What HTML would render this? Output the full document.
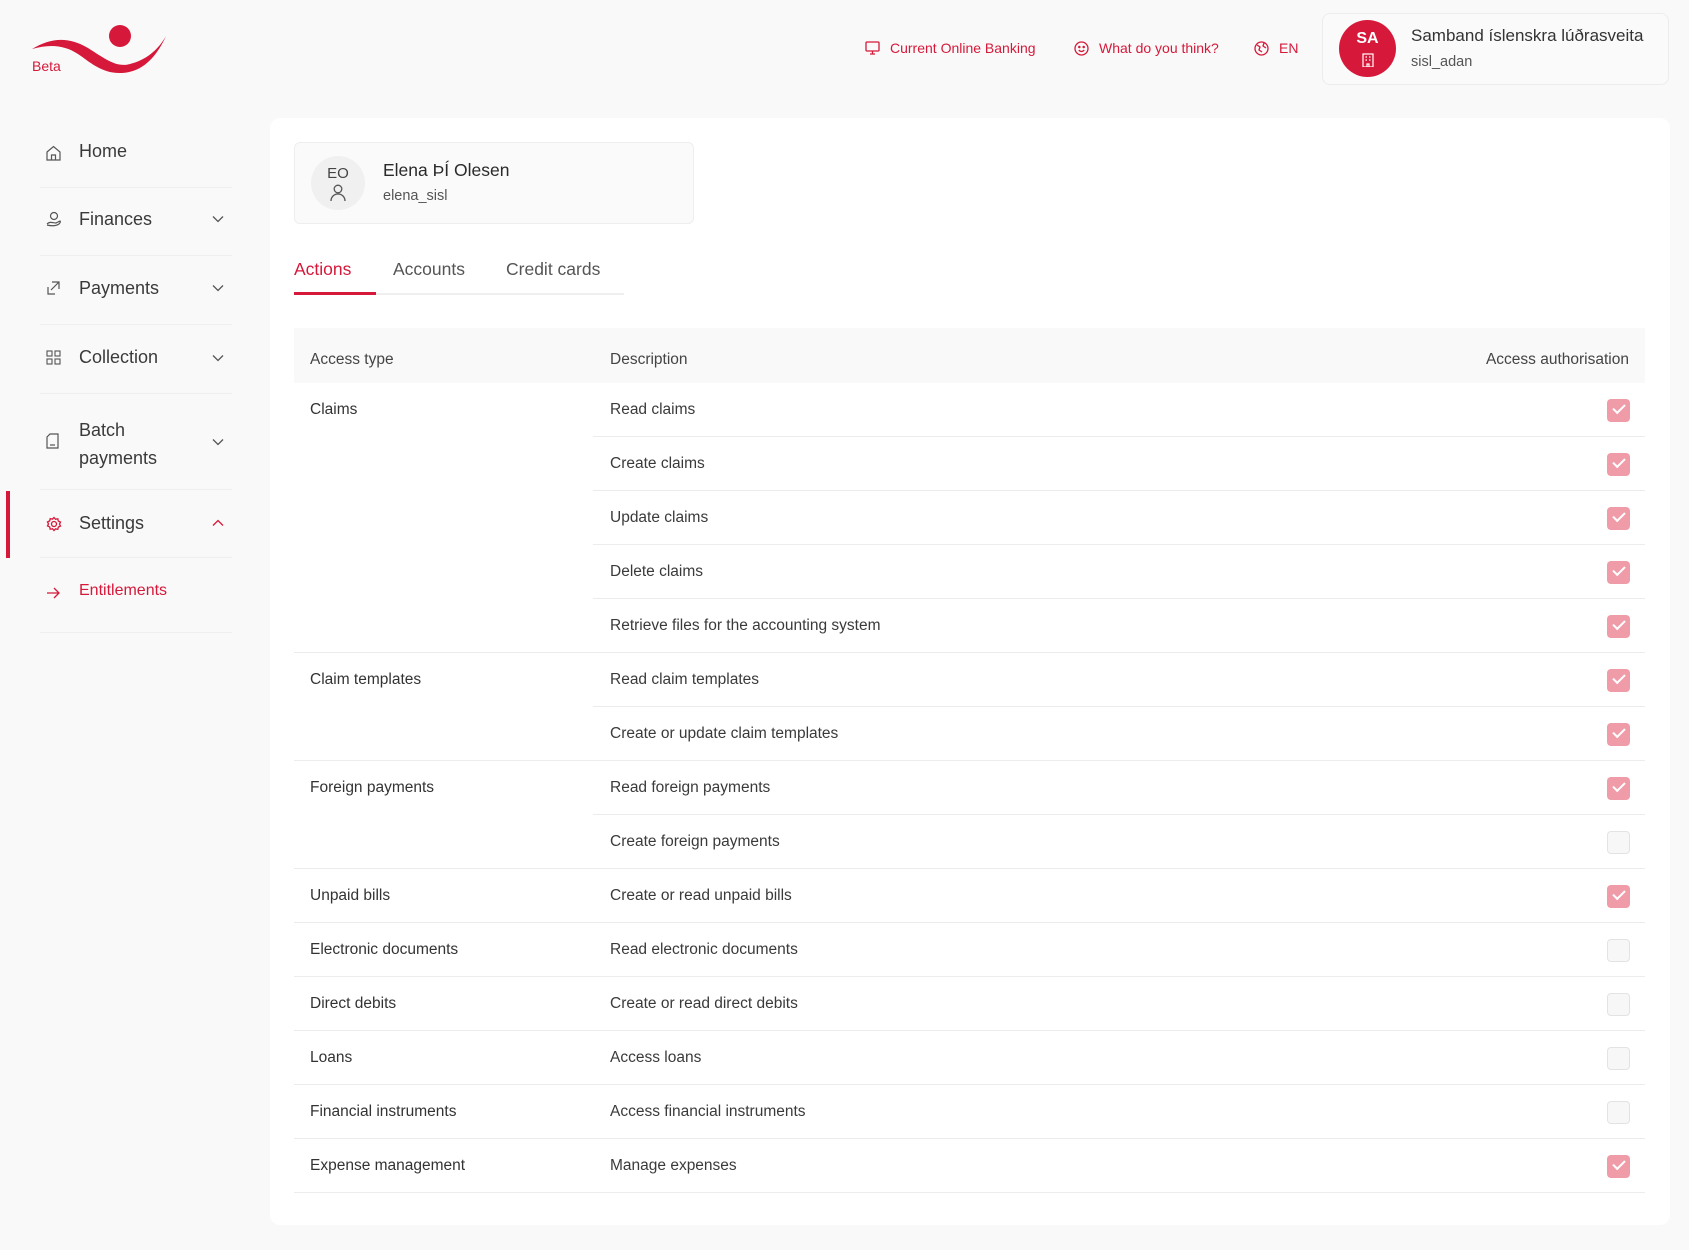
<!DOCTYPE html>
<html><head><meta charset="utf-8"><style>
*{box-sizing:border-box;margin:0;padding:0}
body{width:1689px;height:1250px;background:#f9f9f9;font-family:"Liberation Sans",sans-serif;color:#333;position:relative;overflow:hidden}
.abs{position:absolute}
.red{color:#d6193a}
.nav{position:absolute;left:40px;width:192px;border-bottom:1px solid #efefef}
.nav .t{position:absolute;left:39px;font-size:18px;color:#3a3a3a}
.nav .t.red{color:#d6193a}
.nav svg.ic{position:absolute;left:6px}
.nav .ch{position:absolute;left:172px}
.card{position:absolute;left:270px;top:118px;width:1400px;height:1107px;background:#fff;border-radius:10px}
.row{position:absolute;left:294px;width:1351px;height:54px;font-size:15.5px}
.row .a{position:absolute;left:16px;top:0;line-height:54px;color:#333}
.row .d{position:absolute;left:316px;line-height:54px;color:#3a3a3a}
.row .b{position:absolute;bottom:0;height:1px;background:#ececec;right:0}
.cb{position:absolute;left:1313px;top:16px;width:23px;height:23px;border-radius:4px}
.on{background:#ef9ca8}
.off{background:#f7f7f7;border:1px solid #e3e3e3}
.cb.on::after{content:"";position:absolute;left:6px;top:5px;width:10px;height:5px;border-left:2px solid #fff;border-bottom:2px solid #fff;transform:rotate(-45deg)}
</style></head><body>
<svg class="abs" style="left:30px;top:22px" width="140" height="56" viewBox="0 0 140 56">
<path d="M2 27 C20 16 38 14 58 26 C74 36 86 46 100 42 C116 38 128 28 136 14 C126 36 112 50 92 51 C72 52 60 40 48 32 C34 23 20 22 2 27Z" fill="#d6193a"/>
<circle cx="90" cy="14" r="11" fill="#d6193a"/>
</svg>
<div class="abs red" style="left:32px;top:58px;font-size:14px">Beta</div>

<div class="abs red" style="left:865px;top:40px;font-size:14px;display:flex;align-items:center;gap:10px">
<svg width="15" height="14" viewBox="0 0 15 14" fill="none" stroke="#d6193a" stroke-width="1.3"><rect x="1" y="1" width="13" height="9" rx="1"/><path d="M5 13h5M7.5 10v3"/></svg><span>Current Online Banking</span></div>
<div class="abs red" style="left:1074px;top:40px;font-size:14px;display:flex;align-items:center;gap:10px">
<svg width="15" height="15" viewBox="0 0 15 15" fill="none" stroke="#d6193a" stroke-width="1.3"><circle cx="7.5" cy="7.5" r="6.5"/><path d="M4.8 9c1.5 2 4 2 5.4 0"/><circle cx="5.3" cy="6" r=".6" fill="#d6193a"/><circle cx="9.7" cy="6" r=".6" fill="#d6193a"/></svg><span>What do you think?</span></div>
<div class="abs red" style="left:1254px;top:40px;font-size:14px;display:flex;align-items:center;gap:10px">
<svg width="15" height="15" viewBox="0 0 15 15" fill="none" stroke="#d6193a" stroke-width="1.3"><circle cx="7.5" cy="7.5" r="6.5"/><path d="M3 4l3 2-1 3 3 2M10 2l-1 3 3 2"/></svg><span>EN</span></div>

<div class="abs" style="left:1322px;top:13px;width:347px;height:72px;background:#fafafa;border:1px solid #ececec;border-radius:8px"></div>
<div class="abs" style="left:1339px;top:20px;width:57px;height:57px;border-radius:50%;background:#d6193a;color:#fff;text-align:center;font-weight:bold;font-size:16px;padding-top:10px">SA
<svg style="display:block;margin:5px auto 0" width="12" height="14" viewBox="0 0 12 14" fill="none" stroke="#fff" stroke-width="1.2"><rect x="1" y="1" width="10" height="13"/><path d="M3.5 4h1.5M7 4h1.5M3.5 7h1.5M7 7h1.5M5 14v-3h2v3"/></svg></div>
<div class="abs" style="left:1411px;top:26px;font-size:17px;color:#333">Samband íslenskra lúðrasveita</div>
<div class="abs" style="left:1411px;top:54px;font-size:14.5px;color:#555">sisl_adan</div>

<div class="nav" style="top:131px;height:57px"><svg class="ic" style="top:14px" width="15" height="16" viewBox="0 0 15 16" fill="none" stroke="#555" stroke-width="1.2"><path d="M1 7l6.5-5.5L14 7v8H1z"/><path d="M5.5 15v-5h4v5"/></svg><div class="t" style="top:10px">Home</div></div>
<div class="nav" style="top:188px;height:68px"><svg class="ic" style="top:23px" width="16" height="16" viewBox="0 0 16 16" fill="none" stroke="#555" stroke-width="1.2"><circle cx="8" cy="5" r="3.5"/><path d="M1 13c3-3 6-1 9-1l4-2c1 1 0 2-1 3-3 2-8 2-12 1"/></svg><div class="t" style="top:21px">Finances</div><svg class="ch" style="top:27px" width="12" height="8" viewBox="0 0 12 8" fill="none" stroke="#555" stroke-width="1.3"><path d="M1 1.5l5 5 5-5"/></svg></div>
<div class="nav" style="top:256px;height:69px"><svg class="ic" style="top:24px" width="15" height="16" viewBox="0 0 15 16" fill="none" stroke="#555" stroke-width="1.2"><path d="M6 2h7v7M13 2L5 10M2 7v7h7"/></svg><div class="t" style="top:22px">Payments</div><svg class="ch" style="top:28px" width="12" height="8" viewBox="0 0 12 8" fill="none" stroke="#555" stroke-width="1.3"><path d="M1 1.5l5 5 5-5"/></svg></div>
<div class="nav" style="top:325px;height:69px"><svg class="ic" style="top:25px" width="15" height="15" viewBox="0 0 15 15" fill="none" stroke="#555" stroke-width="1.1"><rect x="1" y="1" width="5" height="5"/><rect x="9" y="1" width="5" height="5"/><rect x="1" y="9" width="5" height="5"/><rect x="9" y="9" width="5" height="5"/></svg><div class="t" style="top:22px">Collection</div><svg class="ch" style="top:29px" width="12" height="8" viewBox="0 0 12 8" fill="none" stroke="#555" stroke-width="1.3"><path d="M1 1.5l5 5 5-5"/></svg></div>
<div class="nav" style="top:394px;height:96px"><svg class="ic" style="top:39px" width="13" height="16" viewBox="0 0 13 16" fill="none" stroke="#555" stroke-width="1.2"><path d="M4 1h8v14H1V4z"/><path d="M4 12h5"/></svg><div class="t" style="top:22px;line-height:28px">Batch<br>payments</div><svg class="ch" style="top:44px" width="12" height="8" viewBox="0 0 12 8" fill="none" stroke="#555" stroke-width="1.3"><path d="M1 1.5l5 5 5-5"/></svg></div>
<div class="abs" style="left:6px;top:491px;width:4px;height:67px;background:#d6193a"></div>
<div class="nav" style="top:490px;height:68px"><svg class="ic" style="top:26px" width="16" height="16" viewBox="0 0 16 16" fill="none" stroke="#d6193a" stroke-width="1.3"><circle cx="8" cy="8" r="2.5"/><path d="M8 1.5l1.5 1.8 2.3-.5.5 2.3 2.2 1-1 2 1 2-2.2 1-.5 2.3-2.3-.5L8 14.5l-1.5-1.8-2.3.5-.5-2.3-2.2-1 1-2-1-2 2.2-1 .5-2.3 2.3.5z"/></svg><div class="t" style="top:23px">Settings</div><svg class="ch" style="top:29px" width="12" height="8" viewBox="0 0 12 8" fill="none" stroke="#d6193a" stroke-width="1.3"><path d="M1 6.5l5-5 5 5"/></svg></div>
<div class="nav" style="top:558px;height:75px"><svg class="ic" style="top:29px" width="14" height="12" viewBox="0 0 14 12" fill="none" stroke="#d6193a" stroke-width="1.3"><path d="M1 6h12M8 1l5 5-5 5"/></svg><div class="t red" style="top:24px;font-size:16px">Entitlements</div></div>

<div class="card"></div>
<div class="abs" style="left:294px;top:142px;width:400px;height:82px;background:#fafafa;border:1px solid #eee;border-radius:6px"></div>
<div class="abs" style="left:311px;top:156px;width:54px;height:54px;border-radius:50%;background:#f0f0f0;text-align:center;color:#444;font-size:15px;padding-top:9px">EO
<svg style="display:block;margin:2px auto 0" width="16" height="18" viewBox="0 0 16 18" fill="none" stroke="#555" stroke-width="1.3"><circle cx="8" cy="5" r="3.8"/><path d="M1 17c0-4 3-7 7-7s7 3 7 7"/></svg></div>
<div class="abs" style="left:383px;top:160px;font-size:17.5px;color:#2a2a2a">Elena ÞÍ Olesen</div>
<div class="abs" style="left:383px;top:188px;font-size:14.5px;color:#555">elena_sisl</div>

<div class="abs" style="left:294px;top:293px;width:330px;height:2px;background:#efefef"></div>
<div class="abs" style="left:294px;top:292px;width:82px;height:3px;background:#d6193a"></div>
<div class="abs red" style="left:294px;top:259px;font-size:17.5px">Actions</div>
<div class="abs" style="left:393px;top:259px;font-size:17.5px;color:#555">Accounts</div>
<div class="abs" style="left:506px;top:259px;font-size:17.5px;color:#555">Credit cards</div>

<div class="abs" style="left:294px;top:328px;width:1351px;height:55px;background:#f9f9f9;font-size:15.5px;color:#444">
<span class="abs" style="left:16px;top:23px">Access type</span>
<span class="abs" style="left:316px;top:23px">Description</span>
<span class="abs" style="right:16px;top:23px">Access authorisation</span></div>

<div class="row" style="top:383px"><div class="a">Claims</div><div class="d">Read claims</div><div class="b" style="left:299px"></div><div class="cb on"></div></div>
<div class="row" style="top:437px"><div class="d">Create claims</div><div class="b" style="left:299px"></div><div class="cb on"></div></div>
<div class="row" style="top:491px"><div class="d">Update claims</div><div class="b" style="left:299px"></div><div class="cb on"></div></div>
<div class="row" style="top:545px"><div class="d">Delete claims</div><div class="b" style="left:299px"></div><div class="cb on"></div></div>
<div class="row" style="top:599px"><div class="d">Retrieve files for the accounting system</div><div class="b" style="left:0"></div><div class="cb on"></div></div>
<div class="row" style="top:653px"><div class="a">Claim templates</div><div class="d">Read claim templates</div><div class="b" style="left:299px"></div><div class="cb on"></div></div>
<div class="row" style="top:707px"><div class="d">Create or update claim templates</div><div class="b" style="left:0"></div><div class="cb on"></div></div>
<div class="row" style="top:761px"><div class="a">Foreign payments</div><div class="d">Read foreign payments</div><div class="b" style="left:299px"></div><div class="cb on"></div></div>
<div class="row" style="top:815px"><div class="d">Create foreign payments</div><div class="b" style="left:0"></div><div class="cb off"></div></div>
<div class="row" style="top:869px"><div class="a">Unpaid bills</div><div class="d">Create or read unpaid bills</div><div class="b" style="left:0"></div><div class="cb on"></div></div>
<div class="row" style="top:923px"><div class="a">Electronic documents</div><div class="d">Read electronic documents</div><div class="b" style="left:0"></div><div class="cb off"></div></div>
<div class="row" style="top:977px"><div class="a">Direct debits</div><div class="d">Create or read direct debits</div><div class="b" style="left:0"></div><div class="cb off"></div></div>
<div class="row" style="top:1031px"><div class="a">Loans</div><div class="d">Access loans</div><div class="b" style="left:0"></div><div class="cb off"></div></div>
<div class="row" style="top:1085px"><div class="a">Financial instruments</div><div class="d">Access financial instruments</div><div class="b" style="left:0"></div><div class="cb off"></div></div>
<div class="row" style="top:1139px"><div class="a">Expense management</div><div class="d">Manage expenses</div><div class="b" style="left:0"></div><div class="cb on"></div></div>
</body></html>
